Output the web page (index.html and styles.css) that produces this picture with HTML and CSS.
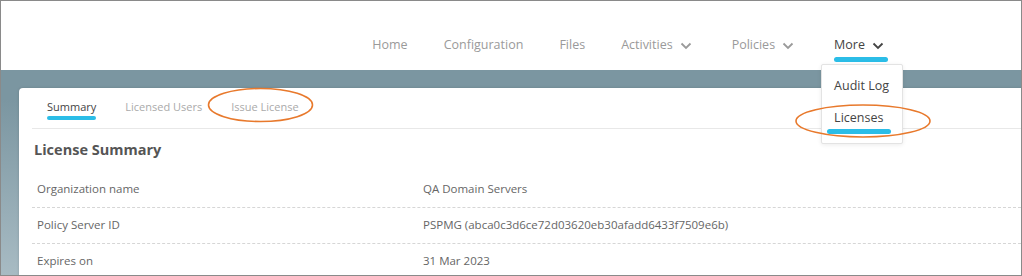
FILE: index.html
```html
<!DOCTYPE html>
<html lang="en">
<head>
    <meta charset="UTF-8">
    <meta name="viewport" content="width=device-width, initial-scale=1.0">
    <title>License Summary</title>
    <link rel="stylesheet" href="styles.css">
</head>
<body>

    <div class="page">
        <header class="topbar">
            <nav class="nav">
                <a class="nav-item"><span class="nav-label">Home</span></a>
                <a class="nav-item"><span class="nav-label">Configuration</span></a>
                <a class="nav-item"><span class="nav-label">Files</span></a>
                <a class="nav-item"><span class="nav-label">Activities
                    <svg class="chevron" viewBox="0 0 12 8"><polyline points="1.5,1.5 6,6 10.5,1.5"/></svg></span></a>
                <a class="nav-item"><span class="nav-label">Policies
                    <svg class="chevron" viewBox="0 0 12 8"><polyline points="1.5,1.5 6,6 10.5,1.5"/></svg></span></a>
                <a class="nav-item active"><span class="nav-label">More
                    <svg class="chevron" viewBox="0 0 12 8"><polyline points="1.5,1.5 6,6 10.5,1.5"/></svg></span>
                    <div class="dropdown">
                        <span class="menu-item">Audit Log</span>
                        <span class="menu-item current">Licenses</span>
                    </div>
                </a>
            </nav>
        </header>

        <main class="main">
            <section class="card">
                <div class="tabs">
                    <span class="tab active">Summary</span>
                    <span class="tab">Licensed Users</span>
                    <span class="tab">Issue License</span>
                </div>

                <h2 class="title">License Summary</h2>

                <div class="row">
                    <span class="label">Organization name</span>
                    <span class="value">QA Domain Servers</span>
                </div>
                <div class="row">
                    <span class="label">Policy Server ID</span>
                    <span class="value">PSPMG (abca0c3d6ce72d03620eb30afadd6433f7509e6b)</span>
                </div>
                <div class="row">
                    <span class="label">Expires on</span>
                    <span class="value">31 Mar 2023</span>
                </div>
            </section>
        </main>

        <!-- annotation marks -->
        <svg class="marks" viewBox="0 0 1022 276">
            <ellipse cx="260.5" cy="105" rx="52" ry="16.5"/>
            <ellipse cx="863" cy="121" rx="67" ry="16"/>
        </svg>
    </div>

</body>
</html>
```

FILE: styles.css
```css
body {
    margin: 0;
    font-family: 'Open Sans', 'Noto Sans', sans-serif;
    background: white;
}

.page {
    position: relative;
    width: 1022px;
    height: 276px;
    box-sizing: border-box;
    border: 1px solid #8a8a8a;
    overflow: hidden;
    display: flex;
    flex-direction: column;
}

.topbar {
    flex-shrink: 0;
    height: 69px;
    background: white;
    display: flex;
    justify-content: flex-end;
    padding: 34px 122px 0 0;
    box-sizing: border-box;
    position: relative;
    z-index: 3;
}

.nav {
    display: flex;
    gap: 12px;
    align-items: flex-start;
}

.nav-item {
    position: relative;
    display: block;
    padding: 0 12px;
    font-size: 12.5px;
    line-height: 20px;
    color: #9a9a9a;
}

.nav-label {
    display: flex;
    align-items: center;
}

.chevron {
    width: 12px;
    height: 8px;
    margin: 1px 4px 0 7px;
    fill: none;
    stroke: currentColor;
    stroke-width: 1.8;
}

.nav-item.active {
    color: #444;
    padding-right: 11px;
}

.nav-item.active::after {
    content: "";
    display: block;
    height: 5px;
    margin-top: 2px;
    border-radius: 3px;
    background: #2bbde7;
}

.dropdown {
    position: absolute;
    top: 29px;
    left: -1px;
    width: 82px;
    height: 80px;
    box-sizing: border-box;
    padding-top: 11px;
    background: white;
    border: 1px solid #e3e3e3;
    border-radius: 2px;
    box-shadow: 0 1px 4px rgba(0, 0, 0, 0.08);
}

.menu-item {
    display: block;
    padding: 0 12px;
    color: #444;
    line-height: 20px;
}

.menu-item + .menu-item {
    margin-top: 12px;
}

.menu-item.current::after {
    content: "";
    display: block;
    width: 64px;
    height: 5px;
    margin: 1px 0 0 -7px;
    border-radius: 3px;
    background: #2bbde7;
}

.main {
    flex: 1;
    display: flex;
    padding: 18px 0 0 18px;
    background: linear-gradient(to bottom, #7b96a1 0, #7b96a1 30px, #a9bcc4 100%);
}

.card {
    flex: 1;
    margin-right: -10px;
    padding-left: 13px;
    background: white;
    border-radius: 4px 0 0 0;
    box-shadow: 0 0 3px rgba(0, 0, 0, 0.15);
}

.tabs {
    display: flex;
    gap: 23px;
    padding: 11px 0 8px 12px;
    border-bottom: 1px solid #e8e8e8;
}

.tab {
    padding: 0 3px;
    font-size: 11px;
    line-height: 16px;
    color: #aaa;
}

.tab::after {
    content: "";
    display: block;
    height: 4px;
    margin-top: 1px;
    border-radius: 2px;
}

.tab.active {
    color: #444;
}

.tab.active::after {
    background: #2bbde7;
}

.title {
    margin: 11px 0 12px 2px;
    font-size: 14.5px;
    line-height: 20px;
    font-weight: bold;
    color: #555;
}

.row {
    display: grid;
    grid-template-columns: 386px 1fr;
    padding: 9px 5px 10px;
    font-size: 11.5px;
    line-height: 16px;
    color: #666;
    border-bottom: 1px dashed #d6d6d6;
}

.marks {
    position: absolute;
    top: -1px;
    left: -1px;
    width: 1022px;
    height: 276px;
    z-index: 5;
    pointer-events: none;
    fill: none;
    stroke: #e8792c;
    stroke-width: 1.6;
}
```
